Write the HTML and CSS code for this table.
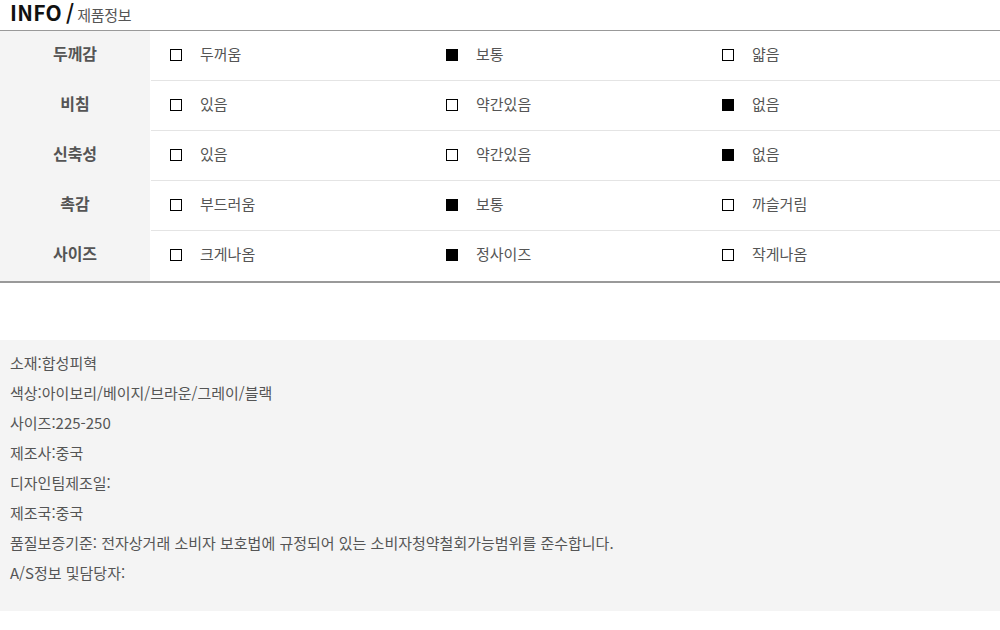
FILE: index.html
```html
<!DOCTYPE html>
<html lang="ko">
<head>
<meta charset="utf-8">
<link rel="stylesheet" href="styles.css">
</head>
<body>
<div class="title"><span class="en">INFO</span><span class="slash">/</span><span class="ko">제품정보</span></div>
<div class="table">
  <div class="row">
    <div class="label">두께감</div>
    <div class="cell"><span class="box"></span>두꺼움</div>
    <div class="cell"><span class="box on"></span>보통</div>
    <div class="cell"><span class="box"></span>얇음</div>
  </div>
  <div class="row">
    <div class="label">비침</div>
    <div class="cell"><span class="box"></span>있음</div>
    <div class="cell"><span class="box"></span>약간있음</div>
    <div class="cell"><span class="box on"></span>없음</div>
  </div>
  <div class="row">
    <div class="label">신축성</div>
    <div class="cell"><span class="box"></span>있음</div>
    <div class="cell"><span class="box"></span>약간있음</div>
    <div class="cell"><span class="box on"></span>없음</div>
  </div>
  <div class="row">
    <div class="label">촉감</div>
    <div class="cell"><span class="box"></span>부드러움</div>
    <div class="cell"><span class="box on"></span>보통</div>
    <div class="cell"><span class="box"></span>까슬거림</div>
  </div>
  <div class="row">
    <div class="label">사이즈</div>
    <div class="cell"><span class="box"></span>크게나옴</div>
    <div class="cell"><span class="box on"></span>정사이즈</div>
    <div class="cell"><span class="box"></span>작게나옴</div>
  </div>
</div>
<div class="info">
  <p>소재:합성피혁</p>
  <p>색상:아이보리/베이지/브라운/그레이/블랙</p>
  <p>사이즈:225-250</p>
  <p>제조사:중국</p>
  <p>디자인팀제조일:</p>
  <p>제조국:중국</p>
  <p>품질보증기준: 전자상거래 소비자 보호법에 규정되어 있는 소비자청약철회가능범위를 준수합니다.</p>
  <p>A/S정보 및담당자:</p>
</div>
</body>
</html>
```
FILE: styles.css
```css
* { box-sizing: border-box; }
html, body { margin: 0; padding: 0; background: #fff; }
body {
  font-family: "Noto Sans CJK KR", "Noto Sans", sans-serif;
  color: #555;
  width: 1000px;
}
.title {
  height: 30px;
  padding-left: 10px;
  display: flex;
  align-items: baseline;
  line-height: 25px;
}
.title .en { font-size: 21px; font-weight: 700; color: #111; letter-spacing: 0.3px; }
.title .slash { font-size: 21px; font-weight: 700; color: #111; margin: 0 3px 0 4px; }
.title .ko { font-size: 15px; color: #555; letter-spacing: -0.3px; }
.table {
  border-top: 1px solid #999;
  border-bottom: 2px solid #999;
}
.row {
  display: grid;
  grid-template-columns: 151px 276px 276px 1fr;
  height: 50px;
}
.row:not(:last-child) .cell { border-bottom: 1px solid #e4e4e4; }
.label {
  background: #f4f4f4;
  margin-right: 1px;
  font-size: 16px;
  font-weight: 700;
  color: #555;
  display: flex;
  align-items: center;
  justify-content: center;
  padding-bottom: 6px;
}
.cell {
  display: flex;
  align-items: center;
  padding-left: 19px;
  font-size: 15px;
  color: #555;
  padding-bottom: 5px;
}
.row:last-child .cell { padding-bottom: 6px; }
.box {
  width: 12px;
  height: 12px;
  border: 1px solid #000;
  margin-right: 18px;
  margin-top: 3px;
  flex: none;
}
.box.on { background: #000; }
.info {
  margin-top: 57px;
  background: #f4f4f4;
  padding: 8px 10px 24px;
  height: 271px;
}
.info p {
  margin: 0;
  font-size: 15px;
  line-height: 30px;
  color: #555;
}
```
